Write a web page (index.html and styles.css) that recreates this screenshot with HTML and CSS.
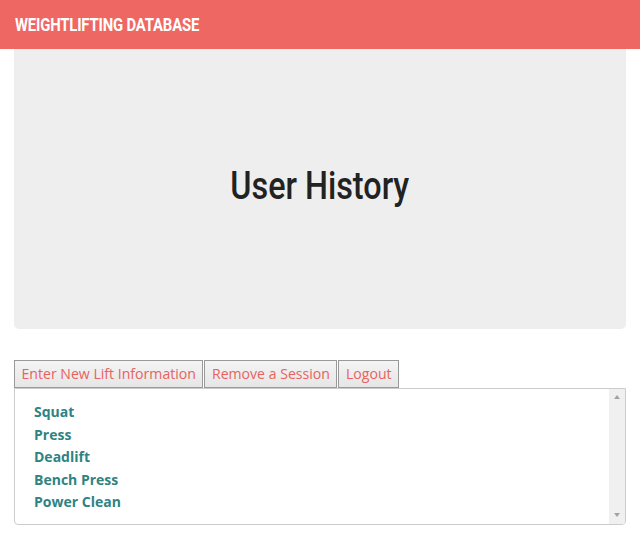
FILE: index.html
```html
<!DOCTYPE html>
<html>
<head>
<meta charset="utf-8">
<link rel="stylesheet" href="styles.css">
</head>
<body>
<header class="topbar"><span class="brand">WEIGHTLIFTING DATABASE</span></header>
<main class="page">
  <section class="hero"><h1 class="hero-title">User History</h1></section>
  <nav class="tabs">
    <button class="tab">Enter New Lift Information</button><button class="tab">Remove a Session</button><button class="tab">Logout</button>
  </nav>
  <div class="lifts">
    <ul class="lift-list">
      <li>Squat</li>
      <li>Press</li>
      <li>Deadlift</li>
      <li>Bench Press</li>
      <li>Power Clean</li>
    </ul>
    <div class="scrollbar">
      <span class="arrow arrow-up"></span>
      <span class="arrow arrow-down"></span>
    </div>
  </div>
</main>
</body>
</html>
```
FILE: styles.css
```css
html, body { margin: 0; padding: 0; background: #fff; }
.topbar {
  height: 49px;
  background: #ee6763;
  display: flex;
  align-items: center;
  padding-left: 15px;
}
.brand {
  display: inline-block;
  color: #fff;
  font-family: "Roboto", sans-serif;
  font-weight: bold;
  font-size: 18px;
  letter-spacing: -0.2px;
  transform: scaleX(0.825);
  transform-origin: left center;
  white-space: nowrap;
}
.page { padding: 0 14px; }
.hero {
  height: 280px;
  background: #eeeeee;
  border-radius: 0 0 5px 5px;
  display: flex;
  align-items: center;
  justify-content: center;
}
.hero-title {
  margin: 0;
  font-family: "Roboto", sans-serif;
  font-weight: 500;
  font-size: 39px;
  color: #222;
  transform: scaleX(0.83);
  margin-bottom: 6px;
  white-space: nowrap;
}
.tabs { margin-top: 31px; display: flex; }
.tab {
  font-family: "Open Sans", "Noto Sans", sans-serif;
  font-size: 14.1px;
  color: #e8625e;
  background: linear-gradient(#f4f4f4, #e6e6e6);
  border: 1px solid #999;
  height: 28px;
  padding: 0 6.5px;
  margin: 0;
  margin-right: 1px;
  line-height: 26px;
}
.lifts {
  height: 135px;
  border: 1px solid #ccc;
  border-radius: 0 0 4px 4px;
  display: flex;
  overflow: hidden;
}
.lift-list {
  flex: 1;
  list-style: none;
  margin: 0;
  padding: 12px 19px;
  font-family: "Open Sans", "Noto Sans", sans-serif;
  font-weight: bold;
  font-size: 14px;
  line-height: 22.5px;
  color: #2f8383;
}
.scrollbar {
  width: 16px;
  background: #f0f0f0;
  display: flex;
  flex-direction: column;
  justify-content: space-between;
  align-items: center;
  padding: 6px 0 7px;
}
.arrow {
  width: 0;
  height: 0;
  border-left: 3.5px solid transparent;
  border-right: 3.5px solid transparent;
}
.arrow-up { border-bottom: 4px solid #a3a3a3; }
.arrow-down { border-top: 4px solid #a3a3a3; }
```
